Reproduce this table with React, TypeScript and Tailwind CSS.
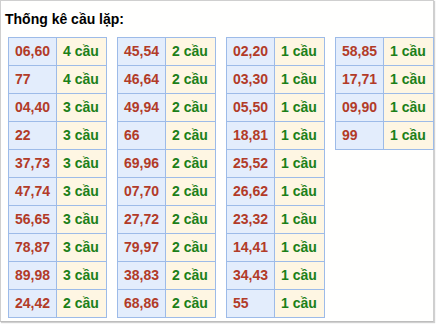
import React from 'react';

type Row = [string, number];

const columns: Row[][] = [
  [
    ['06,60', 4], ['77', 4], ['04,40', 3], ['22', 3], ['37,73', 3],
    ['47,74', 3], ['56,65', 3], ['78,87', 3], ['89,98', 3], ['24,42', 2],
  ],
  [
    ['45,54', 2], ['46,64', 2], ['49,94', 2], ['66', 2], ['69,96', 2],
    ['07,70', 2], ['27,72', 2], ['79,97', 2], ['38,83', 2], ['68,86', 2],
  ],
  [
    ['02,20', 1], ['03,30', 1], ['05,50', 1], ['18,81', 1], ['25,52', 1],
    ['26,62', 1], ['23,32', 1], ['14,41', 1], ['34,43', 1], ['55', 1],
  ],
  [['58,85', 1], ['17,71', 1], ['09,90', 1], ['99', 1]],
];

const CauTable: React.FC<{ rows: Row[] }> = ({ rows }) => (
  <table className="w-[98px] border-collapse table-fixed">
    <tbody>
      {rows.map(([pair, count]) => (
        <tr key={pair}>
          <td className="w-[48px] h-[28px] border border-[#9dbbe8] bg-[#e3edfc] pl-[6px] text-[14px] font-bold text-[#b23b28] whitespace-nowrap">
            {pair}
          </td>
          <td className="w-[50px] h-[28px] border border-[#9dbbe8] bg-[#fef6e3] pl-[6px] text-[14px] font-bold text-[#1b8019] whitespace-nowrap">
            {count} cầu
          </td>
        </tr>
      ))}
    </tbody>
  </table>
);

export default function App() {
  return (
    <div className="w-[436px] h-[324px] bg-white" style={{ fontFamily: '"Liberation Sans", Arial, sans-serif' }}>
      <div className="w-[434px] h-[322px] border border-[#cfcfcf] border-b-[#bdbdbd] shadow-[1px_1px_1px_#d0d0d0] bg-[#fffffe] pl-[7px] pt-[9px]">
        <h2 className="text-[14px] font-bold text-black leading-[18px] -ml-[3px]">Thống kê cầu lặp:</h2>
        <div className="mt-[9px] flex items-start gap-[10px]">
          {columns.map((rows, i) => (
            <CauTable key={i} rows={rows} />
          ))}
        </div>
      </div>
    </div>
  );
}
